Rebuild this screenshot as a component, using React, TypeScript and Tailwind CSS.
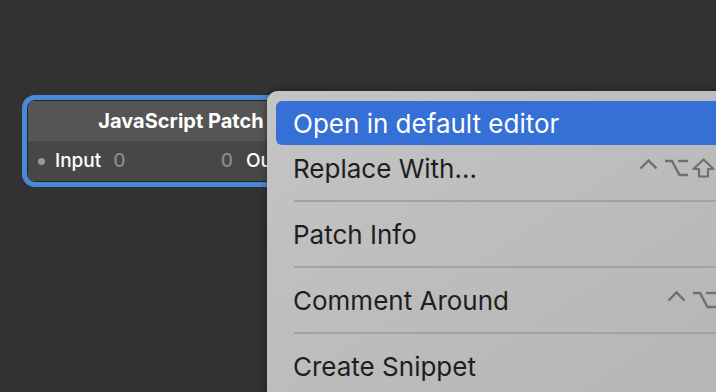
const Caret = () => (
  <svg width="20" height="20" viewBox="0 0 20 20" fill="none">
    <polyline points="1.5,10.5 9.5,2.5 17.5,10.5" stroke="#6f6f6f" strokeWidth="2.4" strokeLinejoin="miter" />
  </svg>
);

const Option = () => (
  <svg width="23" height="20" viewBox="0 0 23 20" fill="none" stroke="#6f6f6f" strokeWidth="2.4">
    <polyline points="0,3 7,3 14.5,17 23,17" />
    <line x1="13" y1="3" x2="23" y2="3" />
  </svg>
);

const Shift = () => (
  <svg width="23" height="20" viewBox="0 0 23 20" fill="none">
    <polygon
      points="11.5,1.5 21.5,11 16,11 16,18.5 7,18.5 7,11 1.5,11"
      stroke="#6f6f6f"
      strokeWidth="2.2"
      strokeLinejoin="round"
    />
  </svg>
);

const Separator = () => (
  <div className="h-[20px] flex items-center pl-[18px]">
    <div className="h-[2px] w-full bg-[#a2a2a2]" />
  </div>
);

const MenuItem = ({ label, keys }: { label: string; keys?: ("ctrl" | "opt" | "shift")[] }) => (
  <div className="h-[46px] flex items-center pl-[17px] pr-[20px] text-[#1e1e1e]">
    <span>{label}</span>
    {keys && (
      <div className="ml-auto flex items-center">
        {keys.includes("ctrl") && (
          <div className="w-[26px]">
            <Caret />
          </div>
        )}
        {keys.includes("opt") && (
          <div className="w-[27px]">
            <Option />
          </div>
        )}
        {keys.includes("shift") && (
          <div className="w-[28px]">
            <Shift />
          </div>
        )}
        <span className="w-[20px] text-[#6f6f6f]">R</span>
      </div>
    )}
  </div>
);

export default function App() {
  return (
    <div
      className="relative w-[716px] h-[392px] overflow-hidden bg-[#323232]"
      style={{ fontFamily: "Inter, 'Liberation Sans', sans-serif" }}
    >
      {/* Patch node */}
      <div className="absolute left-[22px] top-[95px] w-[318px] h-[92px] rounded-[13px] bg-[#4b89d7] p-[5px]">
        <div className="h-full flex flex-col rounded-[8px] border-[1.5px] border-[#262626] overflow-hidden">
          <div className="h-[40px] shrink-0 bg-[#555555] flex items-center justify-center text-white font-bold text-[20px]">
            JavaScript Patch
          </div>
          <div className="flex-1 bg-[#474747] flex items-center px-[10px] text-[19px] font-medium">
            <div className="w-[7px] h-[7px] rounded-full bg-[#9a9a9a]" />
            <span className="ml-[10px] text-white">Input</span>
            <span className="ml-[12px] text-[#8c8c8c]">0</span>
            <span className="ml-auto text-[#8c8c8c]">0</span>
            <span className="ml-[13px] text-white">Output</span>
            <div className="ml-[9px] w-[7px] h-[7px] rounded-full bg-[#9a9a9a]" />
          </div>
        </div>
      </div>

      {/* Context menu */}
      <div className="absolute left-[267px] top-[91px] w-[502px] h-[330px] rounded-tl-[11px] bg-gradient-to-br from-[#c4c4c4] to-[#b4b4b4] shadow-[0_0_8px_rgba(0,0,0,0.4)] pt-[10px] px-[9px] text-[26px]">
        <div className="h-[44px] flex items-center pl-[17px] rounded-[6px] bg-[#3470d5] text-white">
          Open in default editor
        </div>
        <MenuItem label="Replace With…" keys={["ctrl", "opt", "shift"]} />
        <Separator />
        <MenuItem label="Patch Info" />
        <Separator />
        <MenuItem label="Comment Around" keys={["ctrl", "opt"]} />
        <Separator />
        <MenuItem label="Create Snippet" />
      </div>
    </div>
  );
}
